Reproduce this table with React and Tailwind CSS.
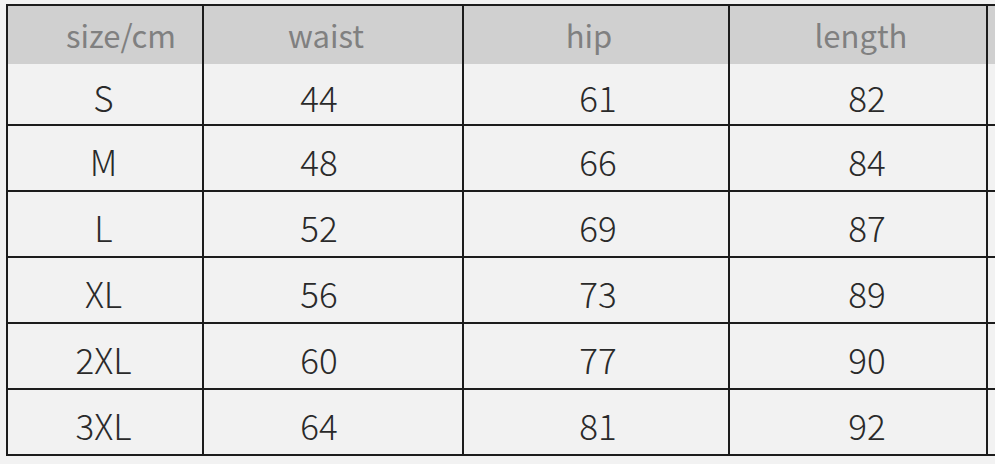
const columns = [
  { title: 'size/cm', head: 'pl-[32px]', body: 'pr-[3px]' },
  { title: 'waist', head: 'pr-[14px]', body: 'pr-[28px]' },
  { title: 'hip', head: 'pr-[14px]', body: 'pl-[4px]' },
  { title: 'length', head: 'pl-[6px]', body: 'pl-[18px]' },
]

const rows = [
  ['S', '44', '61', '82'],
  ['M', '48', '66', '84'],
  ['L', '52', '69', '87'],
  ['XL', '56', '73', '89'],
  ['2XL', '60', '77', '90'],
  ['3XL', '64', '81', '92'],
]

export default function App() {
  return (
    <div
      className="w-[995px] h-[464px] overflow-hidden bg-[#f2f2f2] pt-[4px] pl-[6px]"
      style={{ fontFamily: '"Noto Sans CJK SC", "Noto Sans", sans-serif' }}
    >
      <div className="w-[1190px] border-t-2 border-l-2 border-[#1c1c1c]">
        {/* header */}
        <div className="grid grid-cols-[196px_260px_266px_258px_200px] h-[58px] bg-[#d0d0d0]">
          {columns.map((c) => (
            <div
              key={c.title}
              className={`flex items-center justify-center border-r-2 border-[#1c1c1c] text-[31px] text-[#808080] ${c.head}`}
            >
              {c.title}
            </div>
          ))}
          <div />
        </div>

        {rows.map((r, ri) => (
          <div
            key={r[0]}
            className={`grid grid-cols-[196px_260px_266px_258px_200px] border-b-2 border-[#1c1c1c] ${
              ri === 0 ? 'h-[62px]' : 'h-[66px]'
            }`}
          >
            {r.map((v, i) => (
              <div
                key={i}
                className={`flex items-center justify-center pt-[6px] border-r-2 border-[#1c1c1c] text-[35px] font-light text-[#2a2a2a] ${columns[i].body}`}
              >
                {v}
              </div>
            ))}
            <div />
          </div>
        ))}
      </div>
    </div>
  )
}
